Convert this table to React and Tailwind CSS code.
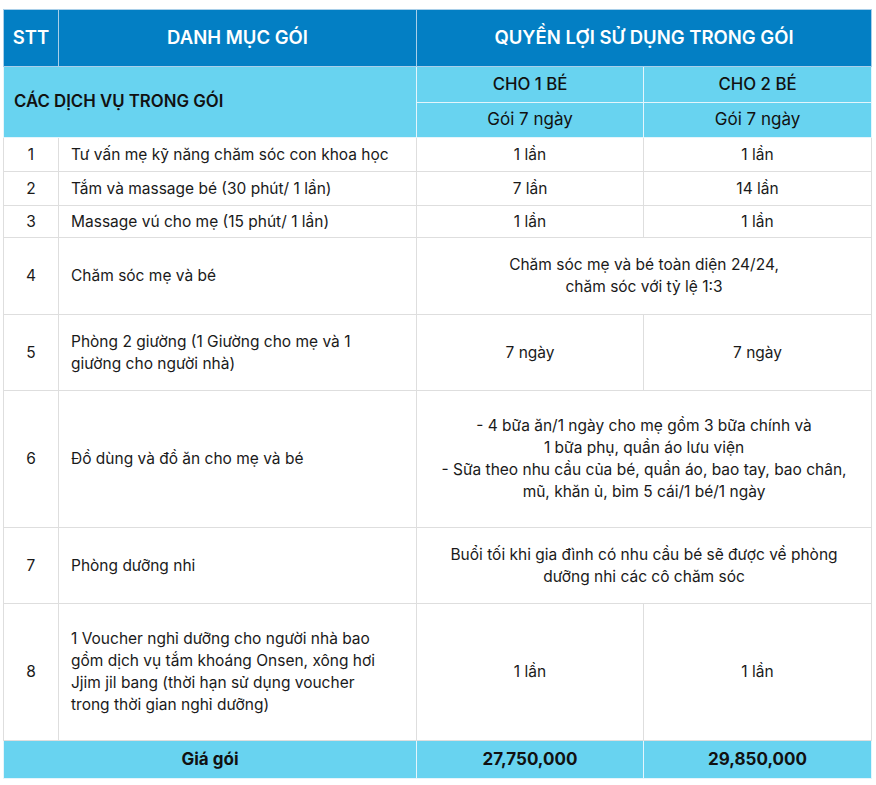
import React from "react";

const F = { fontFamily: "Inter, 'Noto Sans', sans-serif" };

const td = "border border-[#dedede] text-[15.5px] leading-[22px] text-[#1a1a1a]";

export default function App() {
  return (
    <div className="bg-white w-[876px] h-[785px] pt-[9px] pl-[3px]" style={F}>
      <table className="border-collapse table-fixed w-[868px]">
        <colgroup>
          <col className="w-[55px]" />
          <col className="w-[358px]" />
          <col className="w-[227px]" />
          <col className="w-[228px]" />
        </colgroup>
        <tbody>
          <tr className="h-[57px] bg-[#037fc4] text-white text-[18.5px] font-semibold">
            <td className="border border-[#a9cfe9] text-center">STT</td>
            <td className="border border-[#a9cfe9] text-center">DANH MỤC GÓI</td>
            <td className="border border-[#a9cfe9] text-center" colSpan={2}>QUYỀN LỢI SỬ DỤNG TRONG GÓI</td>
          </tr>
          <tr className="h-[36px] bg-[#68d3f0] text-[#111]">
            <td className="border border-[#e4f5fc] pl-[10px] text-[16.8px] font-semibold" colSpan={2} rowSpan={2}>CÁC DỊCH VỤ TRONG GÓI</td>
            <td className="border border-[#e4f5fc] text-center text-[16.8px] font-medium">CHO 1 BÉ</td>
            <td className="border border-[#e4f5fc] text-center text-[16.8px] font-medium">CHO 2 BÉ</td>
          </tr>
          <tr className="h-[35px] bg-[#68d3f0] text-[#111]">
            <td className="border border-[#e4f5fc] text-center text-[17px]">Gói 7 ngày</td>
            <td className="border border-[#e4f5fc] text-center text-[17px]">Gói 7 ngày</td>
          </tr>
          <tr className="h-[34px]">
            <td className={`${td} text-center`}>1</td>
            <td className={`${td} pl-[12px]`}>Tư vấn mẹ kỹ năng chăm sóc con khoa học</td>
            <td className={`${td} text-center`}>1 lần</td>
            <td className={`${td} text-center`}>1 lần</td>
          </tr>
          <tr className="h-[34px]">
            <td className={`${td} text-center`}>2</td>
            <td className={`${td} pl-[12px]`}>Tắm và massage bé (30 phút/ 1 lần)</td>
            <td className={`${td} text-center`}>7 lần</td>
            <td className={`${td} text-center`}>14 lần</td>
          </tr>
          <tr className="h-[32px]">
            <td className={`${td} text-center`}>3</td>
            <td className={`${td} pl-[12px]`}>Massage vú cho mẹ (15 phút/ 1 lần)</td>
            <td className={`${td} text-center`}>1 lần</td>
            <td className={`${td} text-center`}>1 lần</td>
          </tr>
          <tr className="h-[77px]">
            <td className={`${td} text-center`}>4</td>
            <td className={`${td} pl-[12px]`}>Chăm sóc mẹ và bé</td>
            <td className={`${td} text-center`} colSpan={2}>
              Chăm sóc mẹ và bé toàn diện 24/24,
              <br />
              chăm sóc với tỷ lệ 1:3
            </td>
          </tr>
          <tr className="h-[76px]">
            <td className={`${td} text-center`}>5</td>
            <td className={`${td} pl-[12px]`}>
              Phòng 2 giường (1 Giường cho mẹ và 1
              <br />
              giường cho người nhà)
            </td>
            <td className={`${td} text-center`}>7 ngày</td>
            <td className={`${td} text-center`}>7 ngày</td>
          </tr>
          <tr className="h-[137px]">
            <td className={`${td} text-center`}>6</td>
            <td className={`${td} pl-[12px]`}>Đồ dùng và đồ ăn cho mẹ và bé</td>
            <td className={`${td} text-center`} colSpan={2}>
              - 4 bữa ăn/1 ngày cho mẹ gồm 3 bữa chính và
              <br />
              1 bữa phụ, quần áo lưu viện
              <br />
              - Sữa theo nhu cầu của bé, quần áo, bao tay, bao chân,
              <br />
              mũ, khăn ủ, bỉm 5 cái/1 bé/1 ngày
            </td>
          </tr>
          <tr className="h-[76px]">
            <td className={`${td} text-center`}>7</td>
            <td className={`${td} pl-[12px]`}>Phòng dưỡng nhi</td>
            <td className={`${td} text-center`} colSpan={2}>
              Buổi tối khi gia đình có nhu cầu bé sẽ được về phòng
              <br />
              dưỡng nhi các cô chăm sóc
            </td>
          </tr>
          <tr className="h-[137px]">
            <td className={`${td} text-center`}>8</td>
            <td className={`${td} pl-[12px]`}>
              1 Voucher nghỉ dưỡng cho người nhà bao
              <br />
              gồm dịch vụ tắm khoáng Onsen, xông hơi
              <br />
              Jjim jil bang (thời hạn sử dụng voucher
              <br />
              trong thời gian nghỉ dưỡng)
            </td>
            <td className={`${td} text-center`}>1 lần</td>
            <td className={`${td} text-center`}>1 lần</td>
          </tr>
          <tr className="h-[38px] bg-[#68d3f0] text-[#111] text-[17px] font-bold">
            <td className="border border-[#e4f5fc] text-center" colSpan={2}>Giá gói</td>
            <td className="border border-[#e4f5fc] text-center">27,750,000</td>
            <td className="border border-[#e4f5fc] text-center">29,850,000</td>
          </tr>
        </tbody>
      </table>
    </div>
  );
}
